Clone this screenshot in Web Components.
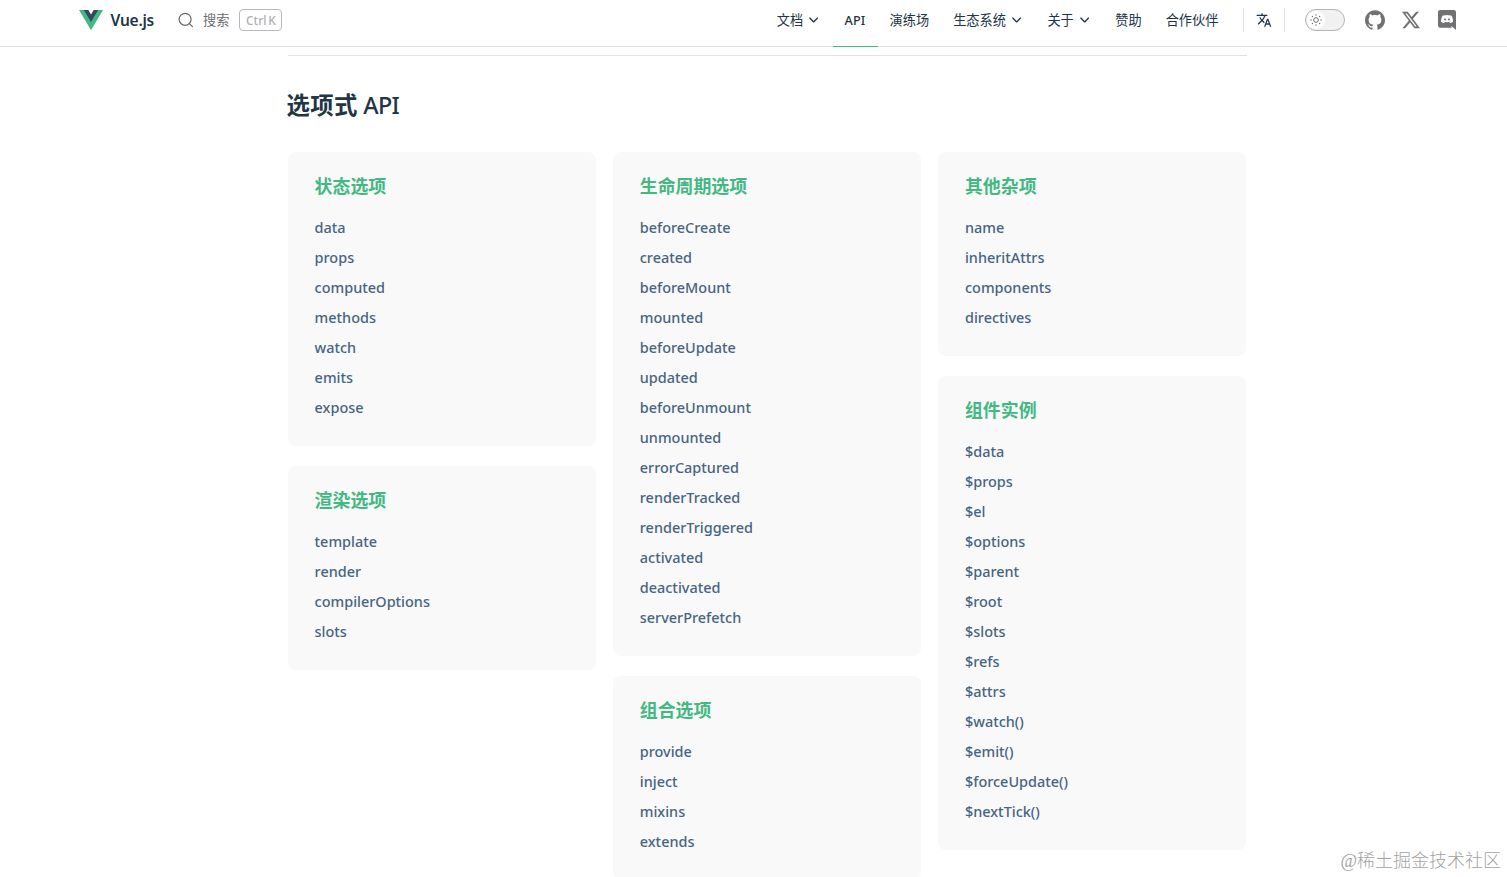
<!DOCTYPE html>
<html lang="zh-CN">
<head>
<meta charset="utf-8">
<title>API | Vue.js</title>
<style>
    html, body {
        margin: 0;
        height: 100%;
        overflow: hidden;
    }
    body {
        background: #fff;
        color: #213547;
        font-family: "Noto Sans", "Noto Sans CJK SC", sans-serif;
    }
</style>
</head>
<body>
<api-page></api-page>

<script>
class ThemeIcon extends HTMLElement {
    static icons = {
        logo: ['0 0 128 110', '<path fill="#42b883" d="M78.8 0 64 25.6 49.2 0H0l64 110.8L128 0z"/><path fill="#35495e" d="M78.8 0 64 25.6 49.2 0H25.6L64 66.5 102.4 0z"/>'],
        search: ['0 0 16 16', '<g fill="none" stroke="currentColor" stroke-width="1.2" stroke-linecap="round"><circle cx="7.1" cy="7.3" r="6"/><path d="m11.6 11.8 2.8 2.8"/></g>'],
        chevron: ['0 0 10 10', '<path fill="none" stroke="currentColor" stroke-width="1.1" stroke-linecap="round" stroke-linejoin="round" d="M1.5 3.4 4.7 6.6l3.2-3.2"/>'],
        translate: ['0 0 24 24', '<path d="M12.87 15.07l-2.54-2.51.03-.03c1.74-1.94 2.98-4.17 3.71-6.53H17V4h-7V2H8v2H1v1.99h11.17C11.5 7.92 10.44 9.75 9 11.35 8.07 10.32 7.3 9.19 6.69 8h-2c.73 1.63 1.73 3.17 2.98 4.56l-5.09 5.02L4 19l5-5 3.11 3.11.76-2.04zM18.5 10h-2L12 22h2l1.12-3h4.75L21 22h2l-4.5-12zm-2.62 7l1.62-4.33L19.12 17h-3.24z"/>'],
        sun: ['0 0 24 24', '<circle cx="12" cy="12" r="4.7" fill="none" stroke="currentColor" stroke-width="2"/><g><circle cx="12" cy="2" r="1.4"/><circle cx="12" cy="22" r="1.4"/><circle cx="2" cy="12" r="1.4"/><circle cx="22" cy="12" r="1.4"/><circle cx="4.9" cy="4.9" r="1.4"/><circle cx="19.1" cy="19.1" r="1.4"/><circle cx="4.9" cy="19.1" r="1.4"/><circle cx="19.1" cy="4.9" r="1.4"/></g>'],
        github: ['0 0 24 24', '<path d="M12 .297c-6.63 0-12 5.373-12 12 0 5.303 3.438 9.8 8.205 11.385.6.113.82-.258.82-.577 0-.285-.01-1.04-.015-2.04-3.338.724-4.042-1.61-4.042-1.61C4.422 18.07 3.633 17.7 3.633 17.7c-1.087-.744.084-.729.084-.729 1.205.084 1.838 1.236 1.838 1.236 1.07 1.835 2.809 1.305 3.495.998.108-.776.417-1.305.76-1.605-2.665-.3-5.466-1.332-5.466-5.93 0-1.31.465-2.38 1.235-3.22-.135-.303-.54-1.523.105-3.176 0 0 1.005-.322 3.3 1.23.96-.267 1.98-.399 3-.405 1.02.006 2.04.138 3 .405 2.28-1.552 3.285-1.23 3.285-1.23.645 1.653.24 2.873.12 3.176.765.84 1.23 1.91 1.23 3.22 0 4.61-2.805 5.625-5.475 5.92.42.36.81 1.096.81 2.22 0 1.606-.015 2.896-.015 3.286 0 .315.21.69.825.57C20.565 22.092 24 17.592 24 12.297c0-6.627-5.373-12-12-12"/>'],
        x: ['0 0 24 24', '<path d="M18.901 1.153h3.68l-8.04 9.19L24 22.846h-7.406l-5.8-7.584-6.638 7.584H.474l8.6-9.83L0 1.154h7.594l5.243 6.932ZM17.61 20.644h2.039L6.486 3.24H4.298Z"/>'],
        discord: ['3 2 18 21', '<path d="M10.076 11c.6 0 1.086.45 1.075 1 0 .55-.474 1-1.075 1C9.486 13 9 12.55 9 12s.475-1 1.076-1zm3.848 0c.601 0 1.076.45 1.076 1s-.475 1-1.076 1c-.59 0-1.075-.45-1.075-1s.474-1 1.075-1zm4.967-9C20.054 2 21 2.966 21 4.163V23l-2.211-1.995-1.245-1.176-1.317-1.25.546 1.943H5.109C3.946 20.522 3 19.556 3 18.359V4.163C3 2.966 3.946 2 5.109 2H18.89zm-3.97 13.713c2.273-.073 3.148-1.596 3.148-1.596 0-3.381-1.482-6.122-1.482-6.122-1.48-1.133-2.89-1.102-2.89-1.102l-.144.168c1.749.546 2.561 1.334 2.561 1.334a8.263 8.263 0 0 0-3.096-1.008 8.527 8.527 0 0 0-2.077.02c-.062 0-.114.011-.175.021-.36.032-1.235.168-2.335.662-.38.178-.607.305-.607.305s.854-.83 2.705-1.376l-.103-.126s-1.409-.031-2.89 1.103c0 0-1.481 2.74-1.481 6.121 0 0 .864 1.522 3.137 1.596 0 0 .38-.472.69-.871-1.307-.4-1.8-1.24-1.8-1.24s.102.074.287.179c.01.01.02.021.041.031.031.022.062.032.093.053.257.147.514.262.75.357.422.168.926.336 1.513.452a7.06 7.06 0 0 0 2.664.01 6.666 6.666 0 0 0 1.491-.451c.36-.137.761-.337 1.183-.62 0 0-.514.861-1.862 1.25.309.399.68.85.68.85z"/>']
    };

    constructor() {
        super();
        this.attachShadow({ mode: 'open' });
    }

    connectedCallback() {
        const [viewBox, shapes] = ThemeIcon.icons[this.getAttribute('name')];
        this.shadowRoot.innerHTML = `
        <style>
            :host {
                display: block;
                flex: none;
                width: 20px;
                height: 20px;
            }
            svg {
                display: block;
                width: 100%;
                height: 100%;
            }
        </style>
        <svg viewBox="${viewBox}" fill="currentColor" preserveAspectRatio="none" aria-hidden="true">${shapes}</svg>
        `;
    }
}

class NavLink extends HTMLElement {
    constructor() {
        super();
        this.attachShadow({ mode: 'open' });
    }

    connectedCallback() {
        const menu = this.hasAttribute('menu') ? '<theme-icon name="chevron"></theme-icon>' : '';
        this.shadowRoot.innerHTML = `
        <style>
            :host {
                display: flex;
                align-items: center;
                gap: 5px;
                box-sizing: border-box;
                height: 47px;
                padding: 0 12px 7px;
                font-size: 13.2px;
                line-height: 20px;
                white-space: nowrap;
                border-bottom: 1px solid transparent;
            }
            :host([active]) {
                width: 45px;
                font-size: 12.7px;
                font-weight: 500;
                border-bottom-color: #42b883;
            }
            theme-icon {
                width: 12px;
                height: 12px;
                margin-right: 0.5px;
            }
        </style>
        <slot></slot>${menu}
        `;
    }
}

class NavBar extends HTMLElement {
    constructor() {
        super();
        this.attachShadow({ mode: 'open' });
    }

    connectedCallback() {
        this.shadowRoot.innerHTML = `
        <style>
            :host {
                display: flex;
                box-sizing: border-box;
                height: 47px;
                padding: 0 51px 0 79px;
                box-shadow: inset 0 -1px #e2e2e3;
            }
            .group {
                display: flex;
                align-items: center;
                height: 40px;
            }
            .logo {
                width: 24px;
                height: 20px;
            }
            .brand {
                width: 67px;
                margin-left: 7.6px;
                margin-right: 0.4px;
                font-size: 15.5px;
                font-weight: 600;
                line-height: 24px;
                letter-spacing: -0.25px;
            }
            .search {
                color: #6b6b6e;
                font-size: 13.2px;
            }
            .search theme-icon {
                width: 16px;
                height: 16px;
                margin-right: 9px;
            }
            .search span {
                margin-top: -2px;
            }
            kbd {
                box-sizing: border-box;
                width: 43px;
                height: 22px;
                margin-left: 10px;
                border: 1px solid #b8b8ba;
                border-radius: 4px;
                color: #b0b0b3;
                font: 500 12px/21px "Noto Sans", sans-serif;
                text-align: center;
                white-space: nowrap;
                word-spacing: -1.5px;
            }
            .links {
                display: flex;
                margin-left: auto;
            }
            .divider {
                width: 1px;
                height: 24px;
                background: #e2e2e3;
            }
            .translate {
                width: 16px;
                height: 16px;
                margin: 0 12px;
            }
            .switch {
                display: block;
                box-sizing: border-box;
                width: 40px;
                height: 22px;
                margin: 0 20px;
                padding: 1px;
                border: 1px solid #b5b5b7;
                border-radius: 11px;
                background: #f1f1f1;
            }
            .knob {
                display: grid;
                place-content: center;
                width: 18px;
                height: 18px;
                border-radius: 50%;
                background: #fff;
                color: #6f6f72;
            }
            .knob theme-icon {
                width: 12px;
                height: 12px;
            }
            .social {
                gap: 17px;
                color: #717174;
            }
            .social .x {
                width: 18px;
                height: 18px;
            }
            .social .discord {
                width: 18px;
                height: 20px;
                margin: 0 0 0 1px;
            }
        </style>
        <div class="group">
            <theme-icon class="logo" name="logo"></theme-icon>
            <span class="brand">Vue.js</span>
        </div>
        <div class="group search">
            <theme-icon name="search"></theme-icon>
            <span>搜索</span>
            <kbd>Ctrl K</kbd>
        </div>
        <nav class="links">
            <nav-link menu>文档</nav-link>
            <nav-link active>API</nav-link>
            <nav-link>演练场</nav-link>
            <nav-link menu>生态系统</nav-link>
            <nav-link menu>关于</nav-link>
            <nav-link>赞助</nav-link>
            <nav-link>合作伙伴</nav-link>
        </nav>
        <div class="group" style="margin-left: 12.6px">
            <span class="divider"></span>
            <theme-icon class="translate" name="translate"></theme-icon>
            <span class="divider"></span>
            <span class="switch"><span class="knob"><theme-icon name="sun"></theme-icon></span></span>
        </div>
        <div class="group social">
            <theme-icon name="github"></theme-icon>
            <theme-icon class="x" name="x"></theme-icon>
            <theme-icon class="discord" name="discord"></theme-icon>
        </div>
        `;
    }
}

class ApiGroup extends HTMLElement {
    constructor() {
        super();
        this.attachShadow({ mode: 'open' });
    }

    connectedCallback() {
        const items = this.getAttribute('items').split(' ');
        this.shadowRoot.innerHTML = `
        <style>
            :host {
                display: block;
                padding: 20px 27px 23px 26.6px;
                border-radius: 8px;
                background: #f9f9f9;
            }
            h3 {
                margin: 0 0 13px;
                color: #42b883;
                font-size: 17.9px;
                font-weight: 700;
                line-height: 28px;
            }
            ul {
                margin: 0;
                padding: 0;
                list-style: none;
            }
            li {
                height: 30px;
                color: #476582;
                font-size: 14.45px;
                font-weight: 500;
                line-height: 30px;
            }
        </style>
        <h3><slot></slot></h3>
        <ul>${items.map(item => `<li>${item}</li>`).join('')}</ul>
        `;
    }
}

class ApiPage extends HTMLElement {
    constructor() {
        super();
        this.attachShadow({ mode: 'open' });
    }

    connectedCallback() {
        this.shadowRoot.innerHTML = `
        <style>
            :host {
                display: block;
                height: 877px;
                overflow: hidden;
            }
            main {
                width: 959px;
                margin: 8px 0 0 288px;
                border-top: 1px solid #e2e2e3;
            }
            h2 {
                margin: 31px 0 29px -1.5px;
                font-size: 23.4px;
                font-weight: 500;
                line-height: 36px;
                letter-spacing: -0.7px;
            }
            h2 b {
                font-weight: 700;
                letter-spacing: 0.4px;
            }
            .columns {
                display: grid;
                grid-template-columns: repeat(3, 308px);
                column-gap: 17.2px;
                align-items: start;
            }
            .column {
                display: grid;
                gap: 20px;
            }
            .watermark {
                position: absolute;
                right: 6px;
                bottom: 3px;
                color: #a3a3a3;
                font: 300 18px/26px "Liberation Serif", "Noto Sans CJK SC", serif;
                white-space: nowrap;
            }
        </style>
        <nav-bar></nav-bar>
        <main>
            <h2><b>选项式</b> API</h2>
            <div class="columns">
                <div class="column">
                    <api-group items="data props computed methods watch emits expose">状态选项</api-group>
                    <api-group items="template render compilerOptions slots">渲染选项</api-group>
                </div>
                <div class="column">
                    <api-group items="beforeCreate created beforeMount mounted beforeUpdate updated beforeUnmount unmounted errorCaptured renderTracked renderTriggered activated deactivated serverPrefetch">生命周期选项</api-group>
                    <api-group items="provide inject mixins extends">组合选项</api-group>
                </div>
                <div class="column">
                    <api-group items="name inheritAttrs components directives">其他杂项</api-group>
                    <api-group items="$data $props $el $options $parent $root $slots $refs $attrs $watch() $emit() $forceUpdate() $nextTick()">组件实例</api-group>
                </div>
            </div>
        </main>
        <div class="watermark">@稀土掘金技术社区</div>
        `;
    }
}

customElements.define('theme-icon', ThemeIcon);
customElements.define('nav-link', NavLink);
customElements.define('nav-bar', NavBar);
customElements.define('api-group', ApiGroup);
customElements.define('api-page', ApiPage);
</script>
</body>
</html>
